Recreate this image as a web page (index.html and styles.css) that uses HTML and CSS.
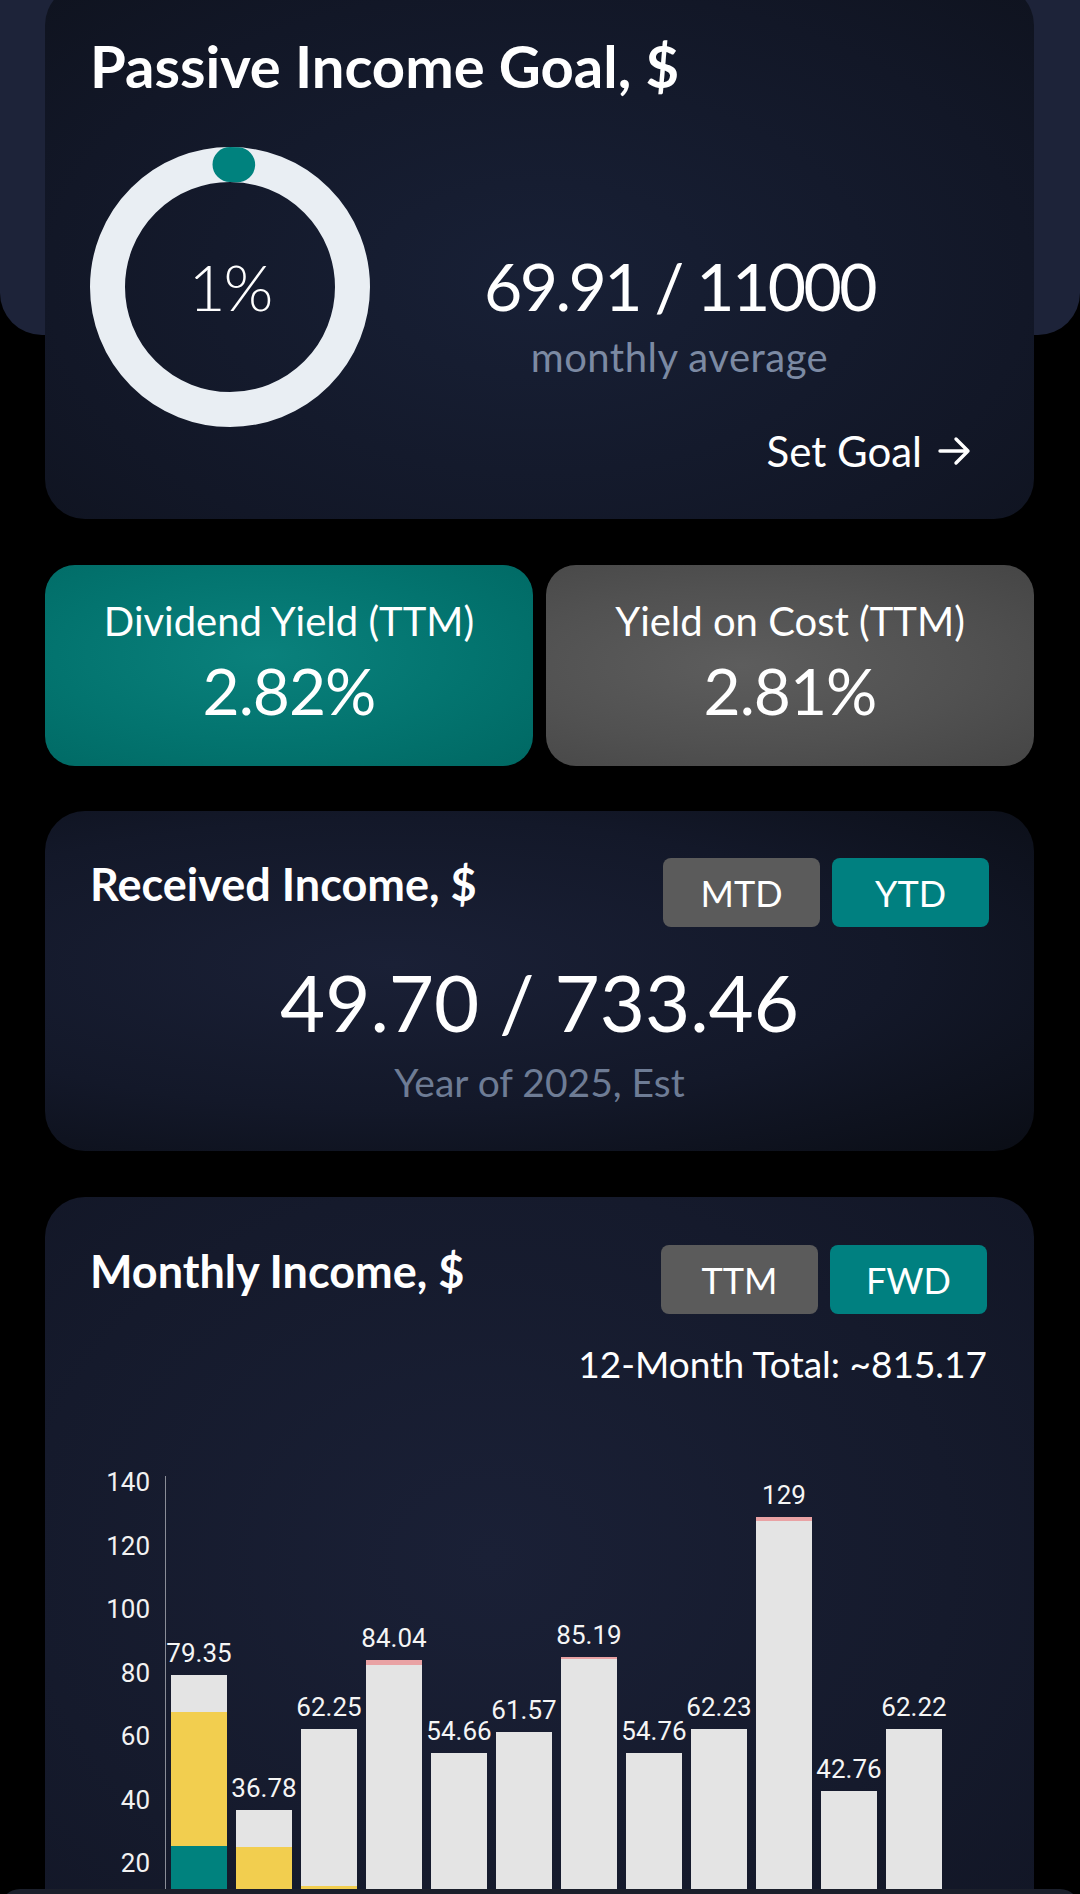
FILE: index.html
```html
<!DOCTYPE html>
<html lang="en">
<head>
<meta charset="utf-8">
<title>Passive Income</title>
<link rel="stylesheet" href="styles.css">
</head>
<body>
<div class="backdrop"></div>
<main class="page">
  <section class="card goal">
    <h1 class="title title-lg">Passive Income Goal, $</h1>
    <div class="goal-row">
      <div class="donut">
        <svg class="donut-svg" width="280" height="280" viewBox="0 0 280 280">
          <circle cx="140" cy="140" r="122.5" fill="none" stroke="#e9eef3" stroke-width="35"/>
          <circle cx="140" cy="140" r="122.5" fill="none" stroke="#00827e" stroke-width="35" stroke-linecap="round" stroke-dasharray="7.7 770" transform="rotate(-90 140 140)"/>
        </svg>
        <span class="donut-pct">1%</span>
      </div>
      <div class="goal-stats">
        <div class="goal-value">69.91 / 11000</div>
        <div class="goal-sub">monthly average</div>
      </div>
    </div>
    <div class="goal-action">
      <span>Set Goal</span>
      <svg class="arrow" width="34" height="30" viewBox="0 0 34 30"><path d="M2 15 H30 M18 3 L30 15 L18 27" fill="none" stroke="#fff" stroke-width="3.4" stroke-linecap="round" stroke-linejoin="round"/></svg>
    </div>
  </section>

  <section class="yields">
    <div class="yield yield-teal">
      <div class="yield-label">Dividend Yield (TTM)</div>
      <div class="yield-value">2.82%</div>
    </div>
    <div class="yield yield-gray">
      <div class="yield-label">Yield on Cost (TTM)</div>
      <div class="yield-value">2.81%</div>
    </div>
  </section>

  <section class="card received">
    <div class="card-head">
      <h2 class="title">Received Income, $</h2>
      <div class="toggle">
        <span class="tbtn">MTD</span>
        <span class="tbtn active">YTD</span>
      </div>
    </div>
    <div class="received-value">49.70 / 733.46</div>
    <div class="received-sub">Year of 2025, Est</div>
  </section>

  <section class="card monthly">
    <div class="card-head">
      <h2 class="title">Monthly Income, $</h2>
      <div class="toggle">
        <span class="tbtn">TTM</span>
        <span class="tbtn active">FWD</span>
      </div>
    </div>
    <div class="total">12-Month Total: ~815.17</div>
    <div class="chart">
      <div class="y-axis">
        <span>140</span><span>120</span><span>100</span><span>80</span><span>60</span><span>40</span><span>20</span>
      </div>
      <div class="plot">
        <div class="col"><span class="val">79.35</span><div class="bar" style="height:252px"><div class="seg gray"></div><div class="seg yellow" style="height:134px"></div><div class="seg teal" style="height:81px"></div></div></div>
        <div class="col"><span class="val">36.78</span><div class="bar" style="height:117px"><div class="seg gray"></div><div class="seg yellow" style="height:80px"></div></div></div>
        <div class="col"><span class="val">62.25</span><div class="bar" style="height:198px"><div class="seg gray"></div><div class="seg yellow" style="height:41px"></div></div></div>
        <div class="col"><span class="val">84.04</span><div class="bar" style="height:267px"><div class="seg pink" style="height:5px"></div><div class="seg gray"></div></div></div>
        <div class="col"><span class="val">54.66</span><div class="bar" style="height:174px"><div class="seg gray"></div></div></div>
        <div class="col"><span class="val">61.57</span><div class="bar" style="height:195px"><div class="seg gray"></div></div></div>
        <div class="col"><span class="val">85.19</span><div class="bar" style="height:270px"><div class="seg pink" style="height:2px"></div><div class="seg gray"></div></div></div>
        <div class="col"><span class="val">54.76</span><div class="bar" style="height:174px"><div class="seg gray"></div></div></div>
        <div class="col"><span class="val">62.23</span><div class="bar" style="height:198px"><div class="seg gray"></div></div></div>
        <div class="col"><span class="val">129</span><div class="bar" style="height:410px"><div class="seg pink" style="height:4px"></div><div class="seg gray"></div></div></div>
        <div class="col"><span class="val">42.76</span><div class="bar" style="height:136px"><div class="seg gray"></div></div></div>
        <div class="col"><span class="val">62.22</span><div class="bar" style="height:198px"><div class="seg gray"></div></div></div>
      </div>
    </div>
  </section>
</main>
<div class="navbar"></div>
</body>
</html>
```

FILE: styles.css
```css
html, body {
  margin: 0;
  padding: 0;
  width: 1080px;
  height: 1894px;
  overflow: hidden;
  background: #000;
}

body {
  position: relative;
  font-family: "Lato", "Noto Sans", sans-serif;
  color: #fff;
}

.backdrop {
  position: absolute;
  top: 0;
  left: 0;
  width: 1080px;
  height: 335px;
  background: #1d2339;
  border-radius: 0 0 42px 42px;
}

.page {
  position: relative;
  padding: 0 46px 0 45px;
}

.card {
  box-sizing: border-box;
  border-radius: 40px;
}

.title {
  margin: 0;
  font-weight: 700;
  font-size: 45px;
  line-height: 52px;
  color: #fff;
}

.title-lg {
  font-size: 58px;
  line-height: 60px;
}

/* Goal card */
.goal {
  margin-top: -15px;
  height: 534px;
  padding: 51px 45px 0;
  background: radial-gradient(ellipse at 50% 55%, #182036 0%, #121727 70%, #0f131f 100%);
}

.goal-row {
  display: flex;
  margin-top: 51px;
  height: 280px;
}

.donut {
  width: 280px;
  height: 280px;
  display: grid;
  place-items: center;
}

.donut-svg,
.donut-pct {
  grid-area: 1 / 1;
}

.donut-pct {
  font-size: 64px;
  line-height: 64px;
  font-weight: 300;
  letter-spacing: -2px;
}

.goal-stats {
  flex: 1;
  text-align: center;
  padding-top: 106px;
}

.goal-value {
  font-size: 66px;
  line-height: 66px;
  font-weight: 400;
  letter-spacing: -2.5px;
}

.goal-sub {
  margin-top: 16px;
  font-size: 40px;
  line-height: 44px;
  letter-spacing: 0.5px;
  color: #7c8aa3;
}

.goal-action {
  display: flex;
  justify-content: flex-end;
  align-items: center;
  gap: 16px;
  margin-top: 0;
  margin-right: 17px;
  font-size: 42px;
  line-height: 48px;
}

.arrow {
  display: block;
}

/* Yield cards */
.yields {
  display: flex;
  gap: 13px;
  margin-top: 46px;
}

.yield {
  flex: 1;
  height: 201px;
  box-sizing: border-box;
  border-radius: 30px;
  text-align: center;
  padding-top: 32px;
}

.yield-teal {
  background: radial-gradient(ellipse at 45% 45%, #0a817c 0%, #03746f 55%, #006863 100%);
}

.yield-gray {
  background: radial-gradient(ellipse at 40% 50%, #5d5d5d 0%, #515151 55%, #454545 100%);
}

.yield-label {
  font-size: 40px;
  line-height: 48px;
}

.yield-value {
  margin-top: 11px;
  font-size: 64px;
  line-height: 70px;
  letter-spacing: -1px;
}

/* Received card */
.received {
  margin-top: 45px;
  height: 340px;
  padding: 47px 45px 0;
  background: radial-gradient(ellipse at 35% 45%, #1a2036 0%, #131829 55%, #0a0d15 100%);
}

.card-head {
  display: flex;
  justify-content: space-between;
  align-items: flex-start;
}

.toggle {
  display: flex;
  gap: 12px;
}

.tbtn {
  width: 157px;
  height: 69px;
  border-radius: 8px;
  background: #5b5b5b;
  display: flex;
  align-items: center;
  justify-content: center;
  font-size: 36px;
  color: #fff;
}

.tbtn.active {
  background: #008080;
}

.received-value {
  margin-top: 33px;
  text-align: center;
  font-size: 78px;
  line-height: 84px;
}

.received-sub {
  margin-top: 15px;
  text-align: center;
  font-size: 39px;
  line-height: 46px;
  color: #6e7c95;
}

/* Monthly card */
.monthly {
  margin-top: 46px;
  height: 800px;
  padding: 48px 47px 0 45px;
  background: radial-gradient(ellipse at 45% 45%, #1a2036 0%, #151a2c 60%, #111524 100%);
}

.total {
  margin-top: 28px;
  text-align: right;
  font-size: 37px;
  line-height: 44px;
}

.chart {
  display: flex;
  align-items: flex-start;
  margin-top: 65px;
  font-family: "Roboto", "Noto Sans", sans-serif;
}

.y-axis {
  width: 60px;
  margin-right: 15px;
  display: flex;
  flex-direction: column;
}

.y-axis span {
  display: block;
  height: 63.5px;
  line-height: 63.5px;
  text-align: right;
  font-size: 26px;
  color: #f2f2f2;
}

.plot {
  margin-top: 25px;
  height: 451px;
  border-left: 1.5px solid #8a8d97;
  padding-left: 5px;
  display: flex;
  align-items: flex-end;
  gap: 9px;
}

.col {
  width: 56px;
  display: flex;
  flex-direction: column;
  align-items: center;
}

.val {
  white-space: nowrap;
  font-size: 26px;
  line-height: 30px;
  margin-bottom: 7px;
  color: #f5f5f5;
}

.bar {
  width: 56px;
  display: flex;
  flex-direction: column;
}

.seg.gray {
  flex: 1;
  background: #e4e4e4;
}

.seg.yellow {
  background: #f2ce4f;
}

.seg.teal {
  background: #00827e;
}

.seg.pink {
  background: #e9a2a4;
}

.navbar {
  position: absolute;
  top: 1889px;
  left: 0;
  width: 1080px;
  height: 60px;
  background: #1b1f2b;
  border-radius: 20px 20px 0 0;
}
```
